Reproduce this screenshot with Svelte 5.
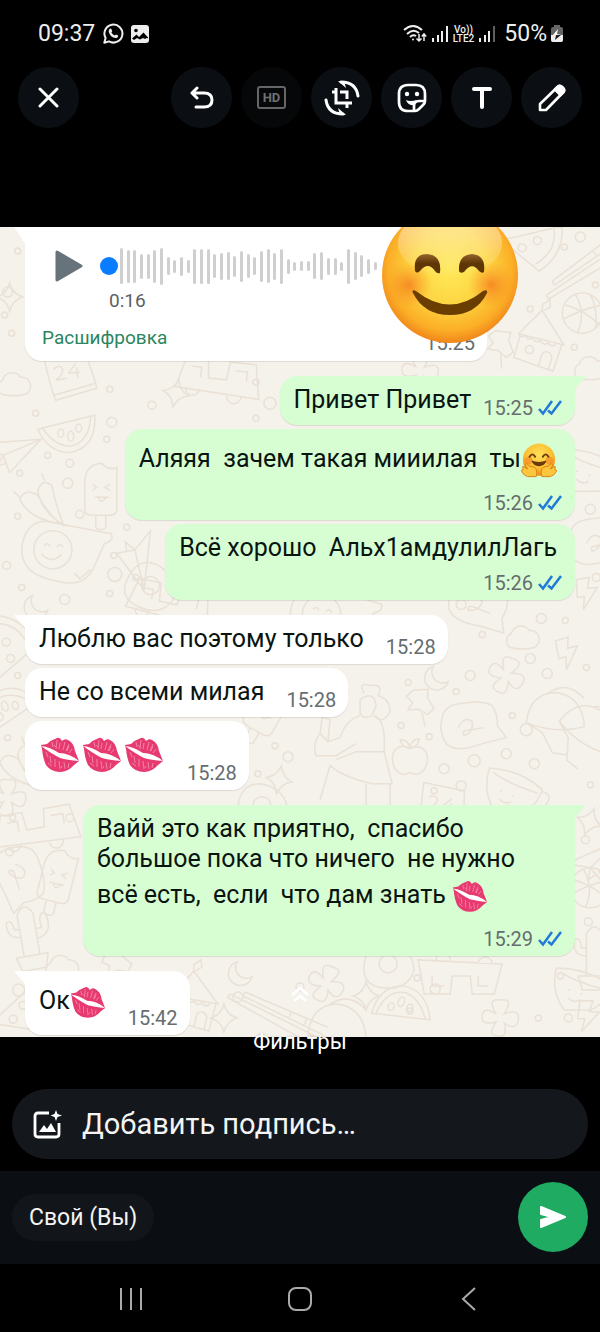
<script>
	const messages = [
		{ out: true, tail: true, time: '15:25', parts: [{ text: 'Привет Привет' }] },
		{
			out: true,
			stacked: true,
			time: '15:26',
			parts: [{ text: 'Аляяя  зачем такая мииилая  ты' }, { emoji: 'hug' }]
		},
		{ out: true, stacked: true, time: '15:26', parts: [{ text: 'Всё хорошо  Альх1амдулилЛагь' }] },
		{ tail: true, time: '15:28', parts: [{ text: 'Люблю вас поэтому только' }] },
		{ time: '15:28', parts: [{ text: 'Не со всеми милая' }] },
		{ big: true, time: '15:28', parts: [{ emoji: 'kiss' }, { emoji: 'kiss' }, { emoji: 'kiss' }] },
		{
			out: true,
			tail: true,
			stacked: true,
			time: '15:29',
			parts: [
				{ text: 'Вайй это как приятно,  спасибо большое пока что ничего  не нужно всё есть,  если  что дам знать ' },
				{ emoji: 'kiss' }
			]
		},
		{ tail: true, time: '15:42', parts: [{ text: 'Ок' }, { emoji: 'kiss' }] }
	];

	const wave = [
		36, 33, 33, 25, 25, 33, 37, 18, 13, 19, 13, 35, 35, 35, 24, 27, 28, 21, 31, 24, 18, 31, 34, 27,
		35, 15, 9, 10, 10, 26, 28, 17, 17, 9, 35, 28, 22, 15, 8
	];

	// wallpaper line drawings, each centred on 0,0
	const shapes = {
		star: 'M0-14Q3-3 13 0Q3 3 0 14Q-3 3-13 0Q-3-3 0-14Z',
		moon: 'M-3-11A12 12 0 1 0 12 4A11 11 0 0 1-3-11Z',
		bolt: 'M-9-14L4-16L2-5L12-6L-2 16L-1 3L-8 4Z',
		cloud: 'M-12 9A8 8 0 0 1-11-5A10 10 0 0 1 7-8A9 9 0 0 1 12 9Q0 12-12 9Z',
		apple: 'M0-9C-12-16-20-6-17 6C-14 18-5 18 0 15C6 18 14 17 17 5C19-8 10-14 0-9ZM0-9Q-8-10-10-18Q-1-18 0-9ZM0-9Q0-18 9-19Q9-12 0-9',
		house: 'M-20-2L2-27L26 6L-20-2M-18-1L-23 22L17 33L24 6M-20-2q3 5 7 1q3 6 7 2q4 6 8 2q4 6 8 2q4 5 8 1M2 29L5 16Q12 11 15 19L12 32M-12 13a4 4 0 1 0 8 0a4 4 0 1 0-8 0M2-27V-33L9-38L10-31L4-27',
		ball: 'M-20 0A20 20 0 1 0 20 0A20 20 0 1 0-20 0M-17-8Q4-2 17 12M-7-19Q4 0-5 20M-19 6Q0-4 19-8M8-18Q16-4 13 15',
		melon: 'M-29-4L28-18Q30 13 5 19Q-17 21-29-4ZM-24-5Q-13 12 3 13Q22 10 24-16M-9 0a3 4 0 1 0 6 0a3 4 0 1 0-6 0M1 3a3 5 0 1 0 6 0a3 5 0 1 0-6 0M9-5a3 4 0 1 0 6 0a3 4 0 1 0-6 0',
		calendar: 'M-24-18L17-24L28 8L-14 20Q-18 8-24-18ZM-14 20L-12 25L29 13L28 8M-14-6Q-8-12-5-6Q-5 0-12 5L-1 3M8-12L1-2L12-3M9-8L10 3',
		pop: 'M-16-8Q-15-25 1-26Q8-18 16-22V18Q17 26 8 26H-10Q-17 25-16 18ZM-5 26V38Q0 43 5 38V26M-8-5L-4-2L-8 1M9-5L4-2L9 1M-6 8H8M-2 8Q0 16 5 8',
		bubble: 'M-38-14Q-33-29-18-30L48-22Q52-16 42-12L34 10Q28 30 8 30Q-22 28-32 18Q-44 6-38-14ZM-28-2a19 19 0 1 0 38 0a19 19 0 1 0-38 0M-18-5q3-5 6 0M-5-5q3-5 6 0M-20 3q10 10 20-1M14 20l6 5l10-10',
		chat: 'M-30-8Q-28-20-12-22Q10-26 20-20Q26-10 25 0L34 12L10 18Q-16 28-26 18Q-34 6-30-8ZM-14 2Q-8-10 0-4Q2 6-8 10Q-12 4 0 4L12 2',
		chili: 'M-20 0Q-14-12-2-4Q8 14 20 24Q-10 20-20 0ZM-2-8Q2-22 12-14Q16 6 24 26Q2 12-2-8ZM-20-2L-26-8M5-18L2-26',
		cup: 'M-26-18Q6-18 28 0Q24 18 8 24H-18Q-32 6-26-18ZM-22-14Q-8-4 24 4M28 2Q42 4 30 18M-14 4h2M-2 8h2M-14 12q6 6 12 2',
		girl: 'M-4-40Q10-50 12-34L8-24Q0-20-4-26ZM0-46Q-6-58 6-54Q20-56 14-44Q26-40 26-28Q18-14 10-24M-4-24Q-18-20-24-2L-36 2L-44-6Q-52 4-48 16H-28L-8 4M10-24Q22-20 20 12L28 44H8Q-20 38-34 26L-44 60M20 12H-8L-28 20M2 44V66M26 44V66M-44-6L-42-22L-34-20L-36 2',
		train: 'M-44 6L-36-24H-14L-12-6H6L8-24H34L40 10ZM-30-16H-20V-6M14-16H26V-6M-34 6a7 7 0 1 0 14 0M8 10a7 7 0 1 0 14 0',
		pizza: 'M-26-22Q0-34 24-16L8 30ZM-20-16Q0-26 19-10M-8-4a4 4 0 1 0 8 0a4 4 0 1 0-8 0M4 8a4 4 0 1 0 8 0a4 4 0 1 0-8 0',
		cactus: 'M-8 26V-16Q0-30 8-16V26M-8 6Q-22 6-20-10Q-14-14-13-2H-8M8 0H14Q12-16 20-14Q26 8 8 10M-16 26H16L12 40H-12Z',
		pin: 'M-12-12L2-18L4-10L14-2L10 6L0 4L-10 8L-8 0L-16-4ZM4 6L12 18',
		flower: 'M-4-4Q-14-20 0-18Q14-20 4-4Q20-10 18 2Q16 14 4 5Q8 20-2 18Q-14 18-4 4Q-20 8-18-3Q-16-12-4-4Z',
		sticks: 'M-38 24L34-30M-36 28L38-22M-38 24L-36 28M-44 38L34-14M-42 42L38-6M-44 38L-42 42M2-6L6-2M16-16L20-10',
		hat: 'M-30 10Q-26-20 0-20Q26-16 28 14Q0 22-30 10ZM-30 10L-14 20L-4 40L10 42M-10-18Q10-34 28-14',
		egg: 'M-24 0Q-22-24-2-24Q24-20 26 4Q20 24-4 22Q-26 20-24 0ZM-9-2a9 9 0 1 0 18 0a9 9 0 1 0-18 0',
		plane: 'M-28 4L26-20L8 22L-4 8ZM-4 8L26-20M-4 8L-6 20L2 14'
	};

	// [shape, x, y, rotation]
	const doodles = [
		['ball', 582, 86, 0], ['house', 538, 110, 4], ['sticks', 590, 30, 0], ['pizza', 532, 16, 110],
		['cloud', 14, 158, 0], ['calendar', 68, 148, 0], ['star', 176, 166, 12], ['melon', 67, 206, 0],
		['train', 220, 158, 6], ['chili', 40, 272, 0], ['pop', 101, 262, 0], ['bubble', 62, 325, 4],
		['plane', 10, 222, 20], ['plane', 140, 330, 120], ['moon', 36, 379, 0], ['star', 10, 70, 0],
		['egg', 150, 360, 20], ['train', 170, 382, 12], ['cup', 590, 240, 0], ['chat', 600, 314, 0],
		['bolt', 585, 366, 0], ['chat', 480, 378, 30], ['cloud', 522, 411, 0],
		['bolt', 566, 426, -8], ['moon', 436, 450, 0], ['hat', 556, 485, 0], ['hat', 590, 500, 30],
		['chat', 472, 498, 0], ['pin', 420, 478, 20], ['girl', 364, 512, 0], ['apple', 410, 530, 0],
		['star', 279, 552, 10], ['cup', 514, 560, 4], ['pop', 268, 480, 30], ['flower', 506, 448, 20],
		['melon', 10, 480, 160], ['pizza', 8, 420, 30], ['flower', 8, 570, 0], ['train', 40, 606, -10],
		['pop', 58, 648, 14], ['chat', 20, 650, 80], ['cactus', 28, 702, -10], ['bubble', 330, 390, 10],
		['cloud', 290, 410, 0], ['moon', 240, 745, 0], ['house', 192, 770, 0], ['egg', 388, 738, 0],
		['flower', 326, 756, 20], ['hat', 338, 796, 0], ['melon', 404, 778, 200], ['star', 366, 768, 0],
		['flower', 500, 790, 0], ['train', 458, 742, 180], ['bolt', 586, 788, 10],
		['star', 224, 790, 0], ['ball', 590, 660, 0], ['cactus', 594, 722, 0], ['star', 589, 594, 20],
		['plane', 594, 632, 0], ['cup', 582, 758, 0], ['pin', 118, 738, 0], ['cloud', 62, 740, 0],
		['pizza', 20, 782, 80], ['egg', 262, 580, 0], ['cloud', 590, 142, 0],
		['calendar', 440, 580, 20], ['chili', 20, 535, 0], ['sticks', 285, 785, 60],
		['flower', 420, 144, 0], ['pin', 500, 120, 30]
	];

	const rings = [
		[18, 24, 3], [8, 65, 5], [12, 106, 3], [5, 88, 3], [110, 162, 3], [152, 178, 4], [256, 155, 3],
		[270, 176, 6], [256, 191, 3], [36, 186, 3], [112, 195, 5], [107, 212, 3], [48, 228, 3],
		[70, 236, 4], [20, 246, 3], [68, 256, 5], [18, 289, 3], [80, 287, 4], [127, 300, 3],
		[114, 328, 3], [115, 347, 7], [136, 350, 3], [22, 360, 3], [65, 372, 5], [110, 366, 3],
		[7, 338, 4], [580, 10, 5], [564, 20, 3], [595, 58, 3], [574, 120, 3], [530, 82, 3],
		[590, 282, 5], [596, 350, 4], [461, 377, 5], [541, 391, 5], [565, 393, 3], [482, 407, 3],
		[530, 431, 5], [547, 446, 5], [586, 440, 3], [408, 455, 3], [470, 448, 5], [456, 464, 3],
		[512, 488, 3], [526, 502, 6], [401, 498, 3], [429, 509, 3], [275, 518, 3], [288, 529, 5],
		[506, 526, 5], [474, 533, 6], [534, 536, 5], [444, 541, 5], [461, 558, 5], [590, 557, 3],
		[258, 546, 3], [434, 563, 3], [8, 510, 3], [18, 448, 3], [10, 624, 4], [70, 590, 4],
		[19, 762, 6], [238, 769, 5], [300, 759, 4], [435, 761, 5], [417, 750, 3], [410, 783, 3],
		[560, 748, 3], [568, 790, 4], [588, 694, 4], [585, 612, 4], [13, 590, 3], [538, 790, 3]
	];
</script>

{#snippet kiss()}
	<svg class="emoji" viewBox="0 0 40 36" role="img" aria-label="поцелуй">
		<path d="M1 8L7 7Q11 3 17 1Q20 0 22 4Q25 1 28 3Q34 6 35 14L39 24L34 28Q28 35 20 35Q11 35 6 28Q3 22 2 12Z" fill="#e73a70" />
		<path d="M1 9Q10 10 19 16Q29 16 39 24Q27 23 20 21Q12 17 1 9Z" fill="#fff" />
		<path d="M12 5l1 5M17 3l-1 9M20 6l-1 6M25 5l-2 8M29 7l-3 7M32 12l-3 4M6 15l2 5M10 19l1 7M15 22l0 8M19 24l1 8M24 25l1 7M29 26l-1 5M8 26l4 3M14 8l2 2M27 14l2-5M22 29l-1 2" fill="none" stroke="#fbb4c9" stroke-width=".6" />
	</svg>
{/snippet}

{#snippet hug()}
	<svg class="emoji" viewBox="0 0 38 36" role="img" aria-label="обнимаю">
		<defs>
			<radialGradient id="hugFace" cx=".5" cy=".35" r=".65">
				<stop offset="0" stop-color="#ffe05a" />
				<stop offset=".6" stop-color="#fcc233" />
				<stop offset="1" stop-color="#ef8a1a" />
			</radialGradient>
		</defs>
		<circle cx="19" cy="17" r="17" fill="url(#hugFace)" />
		<circle cx="8" cy="18" r="4" fill="#f4762a" opacity=".5" />
		<circle cx="30" cy="18" r="4" fill="#f4762a" opacity=".5" />
		<path d="M9 14q3-5 6 0M23 14q3-5 6 0" fill="none" stroke="#6b3b0c" stroke-width="2" stroke-linecap="round" />
		<path d="M11 18q8 3 16 0q-2 6-8 6t-8-6Z" fill="#6b3b0c" />
		<path d="M2 24L7 27L4 22Q6 20 9 24L14 25Q18 28 16 35H7Q3 34 1 30Q-1 28 2 28Z" fill="#fdc63f" stroke="#d98212" />
		<path d="M36 24L31 27L34 22Q32 20 29 24L24 25Q20 28 22 35H31Q35 34 37 30Q39 28 36 28Z" fill="#fdc63f" stroke="#d98212" />
	</svg>
{/snippet}

{#snippet signal(faded)}
	<svg width="16" height="17" viewBox="0 0 16 17" stroke="#eee" stroke-width="2" aria-hidden="true">
		<path d="M1 13v4M6 10v7M10 6v11" />
		<path d="M15 1v16" opacity={faded ? 0.4 : 1} />
	</svg>
{/snippet}

<main>
	<header class="status">
		<span class="clock">09:37</span>
		<svg width="21" height="21" viewBox="0 0 21 21" fill="none" stroke="#eee" stroke-width="2" aria-hidden="true">
			<path d="M1.300 19.700L2.600 15A9 9 0 1 1 6 18.400Z" stroke-linejoin="round" />
			<path d="M6.500 6Q8 5 8.600 6.500L9.300 8.200L8.400 9.500Q9.500 11.700 11.800 12.600L13 11.400L15 12.400Q15.500 14.500 13 15Q7 14.500 5.700 8.500Q5.600 7 6.500 6Z" fill="#eee" stroke="none" />
		</svg>
		<svg class="gallery" width="18" height="18" viewBox="0 0 18 18" aria-hidden="true">
			<rect width="18" height="18" rx="3" fill="#eee" />
			<circle cx="5" cy="5.500" r="1.800" fill="#000" />
			<path d="M1 13.500L5.500 9.500L8 12L12.500 7.500L17 12.500V13.500Q16 12.500 14 14L12 13L9 14.500L6 13L3 15Z" fill="#000" />
		</svg>
		<div class="system">
			<svg width="24" height="19" viewBox="0 0 24 19" fill="none" stroke="#eee" stroke-width="2" aria-hidden="true">
				<path d="M1 6Q10-2 19 6M4 10Q10 4 16 9M7 13Q10 10 13 12" />
				<circle cx="10" cy="15.500" r="1" fill="#eee" stroke="none" />
				<path d="M16 10v7M13.500 14.500L16 17L18.500 14.500M21 17v-7M18.800 12.500L21 10L23.200 12.500" stroke-width="1.500" />
			</svg>
			{@render signal(false)}
			<span class="lte"><span>Vo))</span><span>LTE2</span></span>
			{@render signal(true)}
			<span class="percent">50%</span>
			<svg class="battery" width="12" height="17" viewBox="0 0 12 17" aria-hidden="true">
				<path d="M3 0H9V2H10Q12 2 12 4V15Q12 17 10 17H2Q0 17 0 15V4Q0 2 2 2H3Z" fill="#666" />
				<path d="M0 10H12V15Q12 17 10 17H2Q0 17 0 15Z" fill="#eee" />
				<path d="M7 4L2 10H5V10H10L6 9Z" fill="#fff" />
				<path d="M5 10H10L4 15Z" fill="#222" />
			</svg>
		</div>
	</header>

	<nav class="tools">
		<button class="round close" aria-label="Закрыть">
			<svg width="22" height="22" viewBox="0 0 22 22" stroke="#fff" stroke-width="3" stroke-linecap="round"><path d="M2 2L19 19M19 2L2 19" /></svg>
		</button>
		<button class="round" aria-label="Отменить">
			<svg width="26" height="24" viewBox="0 0 26 24" fill="none" stroke="#fff" stroke-width="3" stroke-linecap="round" stroke-linejoin="round"><path d="M8 2L3 7L8 12M3 7H15Q23 7 23 14Q23 21 15 21H7" /></svg>
		</button>
		<button class="round" disabled><span class="hd">HD</span></button>
		<button class="round" aria-label="Обрезать">
			<svg width="36" height="36" viewBox="0 0 36 36" fill="none" stroke="#fff" stroke-width="3">
				<path d="M12 8V23H28M8 12H12M16 12H23V19M23 23V28" />
				<path d="M17 2Q32 2 34 16M19 34Q4 34 2 20" stroke-linecap="round" />
				<path d="M14 1L20 1L22 8ZM22 35L16 35L14 28Z" fill="#fff" stroke="none" />
			</svg>
		</button>
		<button class="round" aria-label="Стикеры">
			<svg width="30" height="30" viewBox="0 0 30 30" fill="none" stroke="#fff" stroke-width="2.700" stroke-linejoin="round">
				<path d="M18 28H11Q2 28 2 19V11Q2 2 11 2H19Q28 2 28 11V18Q28 20 26 22L22 26Q20 28 18 28Z" />
				<path d="M17 28V23Q17 18 22 18H28" />
				<path d="M9 17Q13 19 20 17L17 22Q11 23 9 17Z" fill="#fff" stroke="none" />
				<circle cx="10" cy="11" r="2.200" fill="#fff" stroke="none" />
				<circle cx="20" cy="11" r="2.200" fill="#fff" stroke="none" />
			</svg>
		</button>
		<button class="round" aria-label="Текст">
			<svg width="22" height="24" viewBox="0 0 22 24" stroke="#fff" stroke-width="4" stroke-linecap="round"><path d="M3 3H19M11 3V21" /></svg>
		</button>
		<button class="round" aria-label="Рисовать">
			<svg width="28" height="28" viewBox="0 0 28 28" fill="none" stroke="#fff" stroke-width="2.600" stroke-linejoin="round">
				<path d="M2 26V20L20 2.500Q22 1 24 3L25 4Q27 6 25.500 8L8 26Z" />
				<path d="M17 5.500L20 2.500Q22 1 24 3L25 4Q27 6 25.500 8L22.500 11Z" fill="#fff" />
			</svg>
		</button>
	</nav>

	<section class="photo">
		<svg class="wallpaper" viewBox="0 0 600 809" preserveAspectRatio="xMidYMin slice" aria-hidden="true">
			{#each doodles as [shape, x, y, turn]}
				<path d={shapes[shape]} transform="translate({x} {y}) rotate({turn})" />
			{/each}
			{#each rings as [x, y, r]}
				<circle cx={x} cy={y} {r} />
			{/each}
		</svg>

		<article class="bubble voice tail">
			<div class="player">
				<button class="play" aria-label="Воспроизвести">
					<svg width="28" height="32" viewBox="0 0 28 32"><path d="M2 2L26 16L2 30Z" fill="#67737b" stroke="#67737b" stroke-width="3" stroke-linejoin="round" /></svg>
				</button>
				<span class="dot"></span>
				<div class="wave">
					{#each wave as height}
						<i style="height: {height}px"></i>
					{/each}
				</div>
			</div>
			<div class="duration">0:16</div>
			<div class="voice-footer">
				<button class="transcript">Расшифровка</button>
				<time>15:25</time>
			</div>
		</article>

		{#each messages as message}
			<article
				class="bubble message"
				class:out={message.out}
				class:tail={message.tail}
				class:stacked={message.stacked}
				class:big={message.big}
			>
				<p>{#each message.parts as part}{#if part.emoji === 'kiss'}{@render kiss()}{:else if part.emoji === 'hug'}{@render hug()}{:else}{part.text}{/if}{/each}</p>
				<div class="meta">
					<time>{message.time}</time>
					{#if message.out}
						<svg width="25" height="16" viewBox="0 0 25 16" fill="none" stroke="#2179d8" stroke-width="2.500" role="img" aria-label="Прочитано">
							<path d="M1 9L5 13.500L14 1M10 10.500L13.500 13.500L23 1" />
						</svg>
					{/if}
				</div>
			</article>
		{/each}

		<svg class="sticker" viewBox="0 0 136 136" role="img" aria-label="улыбка">
			<defs>
				<radialGradient id="face" cx=".5" cy=".45" r=".56">
					<stop offset="0" stop-color="#ffe95b" />
					<stop offset=".5" stop-color="#fdd540" />
					<stop offset=".82" stop-color="#fbae26" />
					<stop offset="1" stop-color="#ef8119" />
				</radialGradient>
				<radialGradient id="cheek">
					<stop offset="0" stop-color="#f5761d" stop-opacity=".75" />
					<stop offset="1" stop-color="#f98a20" stop-opacity="0" />
				</radialGradient>
				<linearGradient id="shine" x2="0" y2="1">
					<stop offset="0" stop-color="#fff" stop-opacity=".5" />
					<stop offset=".4" stop-color="#fff" stop-opacity=".35" />
					<stop offset="1" stop-color="#fff" stop-opacity="0" />
				</linearGradient>
				<linearGradient id="brown" x2="0" y2="1">
					<stop offset="0" stop-color="#93652f" />
					<stop offset=".5" stop-color="#5e3505" />
				</linearGradient>
			</defs>
			<circle cx="68" cy="68" r="68" fill="url(#face)" />
			<ellipse cx="68" cy="36" rx="52" ry="34" fill="url(#shine)" />
			<circle cx="27" cy="78" r="23" fill="url(#cheek)" />
			<circle cx="109" cy="78" r="23" fill="url(#cheek)" />
			<path d="M33 64Q31 47 45 47Q60 48 58 66Q55 67 53 64Q46 54 38 64Q35 67 33 64ZM77 64Q76 48 90 47Q104 48 102 65Q100 67 97 64Q90 54 82 65Q78 67 77 64Z" fill="url(#brown)" />
			<path d="M31 86Q29 82 34 84Q68 111 101 84Q106 82 105 86Q94 108 68 108Q42 108 31 86Z" fill="#6a3e00" />
		</svg>

		<button class="filters">
			<svg width="18" height="16" viewBox="0 0 18 16" fill="none" stroke="#fff" stroke-width="2.500"><path d="M1 9L9 2L17 9M3 15L9 10L15 15" /></svg>
			<span>Фильтры</span>
		</button>
	</section>

	<label class="caption">
		<svg width="29" height="29" viewBox="0 0 29 29" fill="none" stroke="#fff" stroke-width="2.800" stroke-linejoin="round" aria-hidden="true">
			<path d="M16 3H5Q2 3 2 6V24Q2 27 5 27H23Q26 27 26 24V13" />
			<path d="M6 22L11 15L14 19L18 13L23 22Z" fill="#fff" stroke="none" />
			<path d="M23 0L24.500 4L29 5.500L24.500 7L23 11L21.500 7L17.500 5.500L21.500 4Z" fill="#fff" stroke="none" />
		</svg>
		<input type="text" placeholder="Добавить подпись…" aria-label="Добавить подпись" />
	</label>

	<footer class="recipients">
		<button class="chip">Свой (Вы)</button>
		<button class="send" aria-label="Отправить">
			<svg width="28" height="24" viewBox="0 0 28 24"><path d="M2 2L26 12L2 22V15L13 12L2 9Z" fill="#fff" stroke="#fff" stroke-width="2" stroke-linejoin="round" /></svg>
		</button>
	</footer>

	<nav class="system-nav">
		<button aria-label="Недавние"><svg width="24" height="24" viewBox="0 0 24 24" stroke="#aaa" stroke-width="2"><path d="M2 1V23M12 1V23M22 1V23" /></svg></button>
		<button aria-label="Домой"><svg width="24" height="24" viewBox="0 0 24 24" fill="none" stroke="#aaa" stroke-width="2"><rect x="1" y="1" width="22" height="22" rx="7" /></svg></button>
		<button aria-label="Назад"><svg width="24" height="24" viewBox="0 0 24 24" fill="none" stroke="#aaa" stroke-width="2"><path d="M18 1L6 12L18 23" /></svg></button>
	</nav>
</main>

<style>
	:global(body) {
		margin: 0;
		background: #000;
	}

	main {
		background: #000;
		color: #fff;
		font-family: Roboto, 'Noto Sans', sans-serif;
	}

	svg {
		display: block;
		flex: none;
	}

	button {
		display: flex;
		align-items: center;
		justify-content: center;
		margin: 0;
		padding: 0;
		border: none;
		background: none;
		color: inherit;
		font: inherit;
		cursor: pointer;
	}

	.status {
		display: flex;
		align-items: center;
		height: 67px;
		padding: 0 37px 0 38px;
		font-size: 23px;
		color: #eee;
	}

	.clock {
		margin-right: 8px;
	}

	.gallery {
		margin-left: 7px;
	}

	.system {
		display: flex;
		align-items: center;
		gap: 5px;
		margin-left: auto;
	}

	.lte {
		display: flex;
		flex-direction: column;
		align-items: center;
		font-size: 10px;
		font-weight: 500;
		line-height: 9px;
	}

	.percent {
		margin-left: 4px;
	}

	.battery {
		margin-left: -1px;
	}

	.tools {
		display: flex;
		gap: 9px;
		padding: 0 18px;
	}

	.round {
		width: 61px;
		height: 61px;
		border-radius: 50%;
		background: #0b0f13;
	}

	.round:disabled {
		background: #050708;
	}

	.close {
		margin-right: auto;
	}

	.hd {
		padding: 0 4px;
		border: 2px solid #666;
		border-radius: 3px;
		color: #707070;
		font-size: 13px;
		font-weight: 700;
		line-height: 19px;
	}

	.photo {
		position: relative;
		display: flex;
		flex-direction: column;
		align-items: flex-start;
		gap: 4px;
		margin-top: 99px;
		padding: 0 25px 2px;
		background: #f5f1eb;
		color: #0a1410;
	}

	.wallpaper {
		position: absolute;
		top: 0;
		left: 0;
		width: 100%;
		height: 100%;
		fill: none;
		stroke: #e9e1d6;
		stroke-width: 1.5;
	}

	.bubble {
		position: relative;
		box-sizing: border-box;
		border-radius: 17px;
		background: #fff;
		box-shadow: 0 1px 1px rgba(0, 0, 0, 0.1);
	}

	.tail {
		border-top-left-radius: 0;
	}

	.tail::before {
		content: '';
		position: absolute;
		top: 0;
		left: -11px;
		width: 12px;
		height: 14px;
		background: inherit;
		clip-path: polygon(0 0, 100% 0, 100% 100%);
	}

	.voice {
		width: 84%;
		padding: 19px 12px 6px 17px;
	}

	.voice.tail::before {
		height: 18px;
	}

	.player {
		display: flex;
		align-items: center;
		height: 40px;
		padding-left: 13px;
	}

	.dot {
		width: 18px;
		height: 18px;
		margin-left: 17px;
		border-radius: 50%;
		background: #0a7cff;
	}

	.wave {
		display: flex;
		flex: 0 1 257px;
		align-items: center;
		justify-content: space-between;
		margin-left: 2px;
	}

	.wave i {
		width: 3px;
		border-radius: 2px;
		background: #cfcfcf;
	}

	.duration {
		margin: 3px 0 12px 67px;
		color: #5b6164;
		font-size: 19px;
		line-height: 24px;
	}

	.voice-footer {
		display: flex;
		justify-content: space-between;
	}

	.voice-footer time {
		padding-top: 6px;
	}

	.transcript {
		height: 24px;
		color: #2a8560;
		font-size: 19px;
	}

	time {
		color: #656d70;
		font-size: 20px;
		line-height: 24px;
	}

	.message {
		display: flex;
		align-items: flex-end;
		gap: 22px;
		max-width: 492px;
		padding: 9px 12px 5px 14px;
	}

	.message.tail {
		margin-top: 11px;
	}

	.message p {
		margin: 0 0 5px;
		font-size: 25px;
		line-height: 30px;
		white-space: pre-wrap;
	}

	.out {
		align-self: flex-end;
		gap: 12px;
		background: #d7fed2;
	}

	.out.tail {
		border-top-left-radius: 17px;
		border-top-right-radius: 0;
	}

	.out.tail::before {
		right: -11px;
		left: auto;
		clip-path: polygon(0 0, 100% 0, 0 100%);
	}

	.stacked {
		flex-direction: column;
		gap: 3px;
	}

	.stacked p {
		align-self: stretch;
		padding-right: 6px;
	}

	.meta {
		display: flex;
		align-items: center;
		gap: 5px;
	}

	.emoji {
		display: inline-block;
		width: 36px;
		height: 35px;
		margin: 5px 0;
		vertical-align: middle;
	}

	.big .emoji {
		width: 40px;
		height: 36px;
		margin: 7px 1px;
	}

	.sticker {
		position: absolute;
		top: -20px;
		left: 382px;
		width: 136px;
		clip-path: inset(20px 0 0);
	}

	.filters {
		position: absolute;
		bottom: -19px;
		left: 50%;
		flex-direction: column;
		gap: 26px;
		transform: translateX(-50%);
		color: #fff;
		font-size: 22px;
		line-height: 28px;
		text-shadow: 0 1px 3px rgba(0, 0, 0, 0.5);
	}

	.caption {
		display: flex;
		align-items: center;
		gap: 20px;
		height: 70px;
		margin: 52px 12px 12px;
		padding: 0 21px;
		border-radius: 35px;
		background: #14181d;
	}

	.caption input {
		flex: 1;
		min-width: 0;
		padding: 0;
		border: none;
		outline: none;
		background: none;
		color: #fff;
		font: inherit;
		font-size: 29px;
	}

	.caption input::placeholder {
		color: #f4f4f4;
		opacity: 1;
	}

	.recipients {
		display: flex;
		align-items: center;
		justify-content: space-between;
		padding: 11px 12px 12px;
		background: #0b0f14;
	}

	.chip {
		height: 47px;
		padding: 0 17px;
		border-radius: 24px;
		background: #12161b;
		color: #f4f4f4;
		font-size: 23px;
	}

	.send {
		width: 70px;
		height: 70px;
		border-radius: 50%;
		background: #1fab61;
	}

	.system-nav {
		display: flex;
		justify-content: space-around;
		height: 69px;
		padding: 0 47px;
	}

	.system-nav button {
		flex: 1;
	}
</style>
